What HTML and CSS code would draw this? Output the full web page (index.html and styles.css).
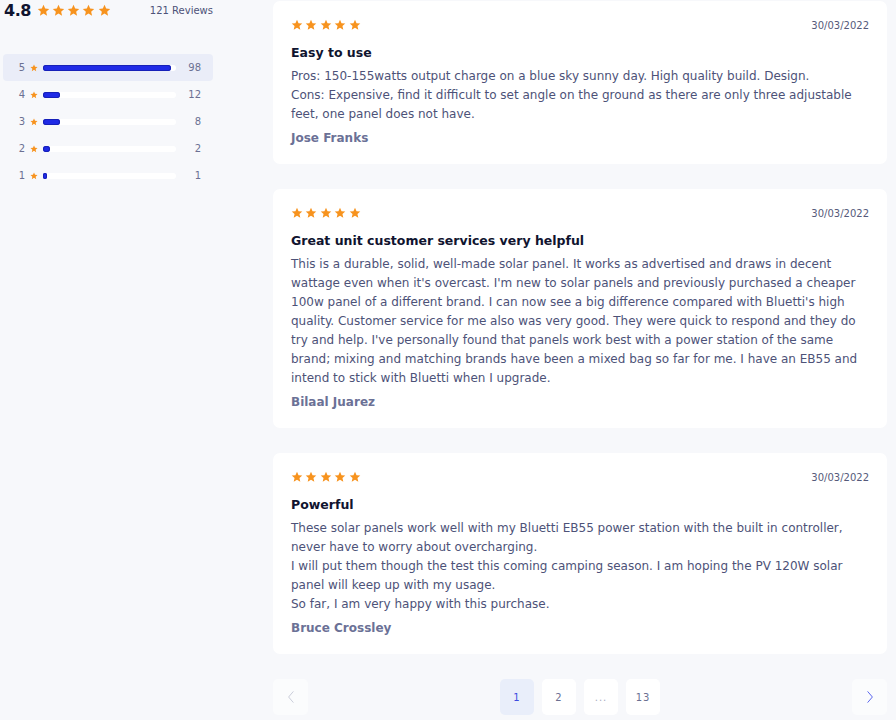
FILE: index.html
```html
<!DOCTYPE html>
<html>
<head>
<meta charset="utf-8">
<link rel="stylesheet" href="styles.css">
</head>
<body>
<svg width="0" height="0" style="position:absolute">
  <defs>
    <symbol id="star" viewBox="0 0 24 24"><path d="M12 1.5l3.1 6.9 7.4.7-5.6 5 1.7 7.4L12 17.6l-6.6 3.9 1.7-7.4-5.6-5 7.4-.7z"/></symbol>
  </defs>
</svg>
<div class="page">
  <aside class="summary">
    <div class="summary-head">
      <span class="score">4.8</span>
      <span class="stars big">
        <svg><use href="#star"/></svg><svg><use href="#star"/></svg><svg><use href="#star"/></svg><svg><use href="#star"/></svg><svg><use href="#star"/></svg>
      </span>
      <span class="total">121 Reviews</span>
    </div>
    <ul class="dist">
      <li class="row active"><span class="num">5</span><svg class="s"><use href="#star"/></svg><span class="track"><span class="fill" style="width:96%"></span></span><span class="count">98</span></li>
      <li class="row"><span class="num">4</span><svg class="s"><use href="#star"/></svg><span class="track"><span class="fill" style="width:13%"></span></span><span class="count">12</span></li>
      <li class="row"><span class="num">3</span><svg class="s"><use href="#star"/></svg><span class="track"><span class="fill" style="width:13%"></span></span><span class="count">8</span></li>
      <li class="row"><span class="num">2</span><svg class="s"><use href="#star"/></svg><span class="track"><span class="fill" style="width:5%"></span></span><span class="count">2</span></li>
      <li class="row"><span class="num">1</span><svg class="s"><use href="#star"/></svg><span class="track"><span class="fill" style="width:3%"></span></span><span class="count">1</span></li>
    </ul>
  </aside>
  <main class="reviews">
    <article class="card">
      <div class="card-top">
        <span class="stars"><svg><use href="#star"/></svg><svg><use href="#star"/></svg><svg><use href="#star"/></svg><svg><use href="#star"/></svg><svg><use href="#star"/></svg></span>
        <span class="date">30/03/2022</span>
      </div>
      <h3 class="title">Easy to use</h3>
      <p class="text">Pros: 150-155watts output charge on a blue sky sunny day. High quality build. Design.<br>Cons: Expensive, find it difficult to set angle on the ground as there are only three adjustable feet, one panel does not have.</p>
      <div class="author">Jose Franks</div>
    </article>
    <article class="card">
      <div class="card-top">
        <span class="stars"><svg><use href="#star"/></svg><svg><use href="#star"/></svg><svg><use href="#star"/></svg><svg><use href="#star"/></svg><svg><use href="#star"/></svg></span>
        <span class="date">30/03/2022</span>
      </div>
      <h3 class="title">Great unit customer services very helpful</h3>
      <p class="text">This is a durable, solid, well-made solar panel. It works as advertised and draws in decent wattage even when it's overcast. I'm new to solar panels and previously purchased a cheaper 100w panel of a different brand. I can now see a big difference compared with Bluetti's high quality. Customer service for me also was very good. They were quick to respond and they do try and help. I've personally found that panels work best with a power station of the same brand; mixing and matching brands have been a mixed bag so far for me. I have an EB55 and intend to stick with Bluetti when I upgrade.</p>
      <div class="author">Bilaal Juarez</div>
    </article>
    <article class="card">
      <div class="card-top">
        <span class="stars"><svg><use href="#star"/></svg><svg><use href="#star"/></svg><svg><use href="#star"/></svg><svg><use href="#star"/></svg><svg><use href="#star"/></svg></span>
        <span class="date">30/03/2022</span>
      </div>
      <h3 class="title">Powerful</h3>
      <p class="text">These solar panels work well with my Bluetti EB55 power station with the built in controller, never have to worry about overcharging.<br>I will put them though the test this coming camping season. I am hoping the PV 120W solar panel will keep up with my usage.<br>So far, I am very happy with this purchase.</p>
      <div class="author">Bruce Crossley</div>
    </article>
    <nav class="pager">
      <button class="pbtn arrow prev"><svg viewBox="0 0 12 20"><path d="M9 3L3 10l6 7"/></svg></button>
      <div class="pages">
        <button class="pbtn current">1</button>
        <button class="pbtn">2</button>
        <button class="pbtn dots">...</button>
        <button class="pbtn">13</button>
      </div>
      <button class="pbtn arrow next"><svg viewBox="0 0 12 20"><path d="M3 3l6 7-6 7"/></svg></button>
    </nav>
  </main>
</div>
</body>
</html>
```
FILE: styles.css
```css
* { box-sizing: border-box; }
html, body { margin: 0; padding: 0; }
body {
  background: #f7f8fb;
  font-family: "DejaVu Sans", "Noto Sans", sans-serif;
  color: #4d5278;
  width: 896px;
  height: 720px;
  overflow: hidden;
}
.page {
  display: grid;
  grid-template-columns: 210px 614px;
  column-gap: 60px;
  padding-left: 3px;
}
.summary-head {
  display: flex;
  align-items: center;
  height: 20px;
}
.score {
  font-weight: bold;
  font-size: 16px;
  color: #10142f;
  margin-left: 1px;
  letter-spacing: -0.5px;
}
.stars { display: flex; gap: 2.4px; }
.stars svg { width: 12px; height: 12px; fill: #f7931e; }
.stars.big { margin-left: 6px; gap: 2.2px; }
.stars.big svg { width: 13px; height: 13px; }
.total {
  margin-left: auto;
  font-size: 10px;
  color: #4d5278;
}
.dist {
  list-style: none;
  margin: 34px 0 0;
  padding: 0;
}
.row {
  display: flex;
  align-items: center;
  height: 27px;
  border-radius: 4px;
  font-size: 10px;
  color: #6b7092;
}
.row.active { background: #eaedf8; }
.num { width: 22px; text-align: right; }
.row .s { width: 8px; height: 8px; fill: #f7931e; margin-left: 5px; }
.track {
  width: 133px;
  height: 6px;
  border-radius: 3px;
  background: #ffffff;
  margin-left: 5px;
  position: relative;
}
.fill {
  display: block;
  height: 6px;
  border-radius: 3px;
  background: #1f2ae6;
  box-shadow: inset 0 0 0 1px #1620b8;
}
.count { width: 25px; text-align: right; }
.reviews {
  display: flex;
  flex-direction: column;
  gap: 25px;
  padding-top: 1px;
}
.card {
  background: #ffffff;
  border-radius: 7px;
  padding: 18px 18px 17px;
}
.card-top {
  display: flex;
  justify-content: space-between;
  align-items: center;
  height: 12px;
}
.date { font-size: 10px; color: #555a7a; }
.title {
  margin: 13px 0 0;
  font-size: 12.5px;
  font-weight: bold;
  color: #10142f;
  line-height: 18px;
}
.text {
  margin: 5px 0 0;
  font-size: 12px;
  line-height: 19px;
  color: #4d5278;
}
.author {
  margin-top: 5px;
  font-size: 12px;
  font-weight: bold;
  color: #6b7196;
  line-height: 18px;
}
.pager {
  display: flex;
  justify-content: space-between;
}
.pages { display: flex; gap: 8px; }
.pbtn {
  width: 34px;
  height: 36px;
  border: none;
  border-radius: 5px;
  background: #ffffff;
  font-family: inherit;
  font-size: 10px;
  color: #6b7092;
  letter-spacing: 1px;
  padding: 0;
  display: flex;
  align-items: center;
  justify-content: center;
}
.pbtn.current { background: #e9eefa; color: #3d4be0; }
.pbtn.dots { color: #a8acc0; }
.arrow { width: 35px; background: #fbfcfd; }
.arrow svg { width: 10px; height: 16px; fill: none; stroke-width: 1.2; }
.prev svg { stroke: #c8cbd8; }
.next svg { stroke: #5560ee; }
```
